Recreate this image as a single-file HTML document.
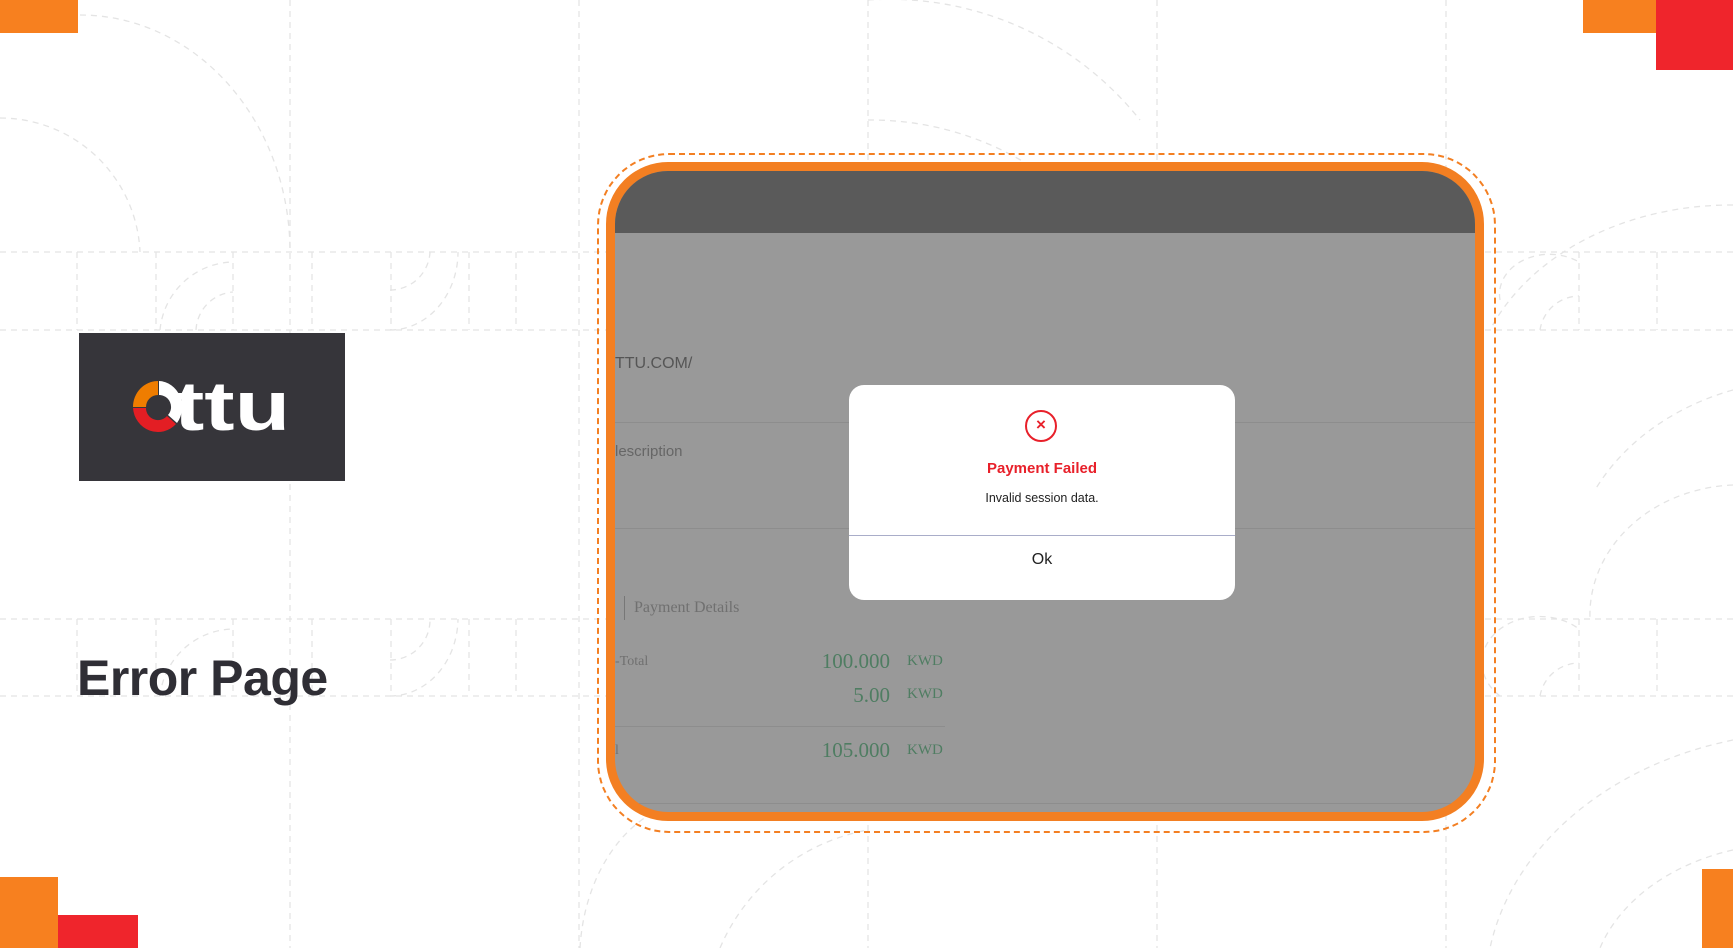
<!DOCTYPE html>
<html><head><meta charset="utf-8"><style>
*{margin:0;padding:0;box-sizing:border-box}
body{width:1733px;height:948px;background:#fff;position:relative;overflow:hidden;font-family:"Liberation Sans",sans-serif}
.abs{position:absolute}
</style></head><body>
<svg class="abs" style="left:0;top:0" width="1733" height="948">
<g stroke="#e4e4e4" stroke-width="1.3" fill="none" stroke-dasharray="6 5">
<line x1="0" y1="252" x2="1733" y2="252"/><line x1="0" y1="330" x2="1733" y2="330"/>
<line x1="0" y1="619" x2="1733" y2="619"/><line x1="0" y1="696" x2="1733" y2="696"/>
<line x1="290" y1="0" x2="290" y2="948"/><line x1="579" y1="0" x2="579" y2="948"/>
<line x1="868" y1="0" x2="868" y2="948"/><line x1="1157" y1="0" x2="1157" y2="948"/>
<line x1="1446" y1="0" x2="1446" y2="948"/>
<g>
<line x1="77" y1="252" x2="77" y2="330"/><line x1="156" y1="252" x2="156" y2="330"/><line x1="233" y1="252" x2="233" y2="330"/><line x1="312" y1="252" x2="312" y2="330"/><line x1="391" y1="252" x2="391" y2="330"/><line x1="469" y1="252" x2="469" y2="330"/><line x1="516" y1="252" x2="516" y2="330"/>
<line x1="77" y1="619" x2="77" y2="696"/><line x1="156" y1="619" x2="156" y2="696"/><line x1="233" y1="619" x2="233" y2="696"/><line x1="312" y1="619" x2="312" y2="696"/><line x1="391" y1="619" x2="391" y2="696"/><line x1="469" y1="619" x2="469" y2="696"/><line x1="516" y1="619" x2="516" y2="696"/>
<line x1="1579" y1="252" x2="1579" y2="330"/><line x1="1657" y1="252" x2="1657" y2="330"/>
<line x1="1579" y1="619" x2="1579" y2="696"/><line x1="1657" y1="619" x2="1657" y2="696"/>
</g>
<path d="M0 118 A140 140 0 0 1 140 252"/><path d="M80 15 A210 237 0 0 1 290 252"/>
<path d="M160 330 A75 75 0 0 1 233 262"/><path d="M196 330 A40 40 0 0 1 233 292"/>
<path d="M390 290 A40 40 0 0 0 430 252"/><path d="M390 330 A68 78 0 0 0 458 252"/>
<path d="M868 120 A300 300 0 0 1 1157 330"/><path d="M868 0 A320 320 0 0 1 1140 120"/>
<path d="M1733 205 A260 200 0 0 0 1490 330"/><path d="M1733 390 A240 200 0 0 0 1595 490"/>
<path d="M1733 485 A150 130 0 0 0 1590 619"/><path d="M1733 740 A330 260 0 0 0 1490 948"/>
<path d="M1733 850 A200 150 0 0 0 1600 948"/>
<path d="M160 696 A75 75 0 0 1 233 629"/><path d="M390 660 A40 40 0 0 0 430 619"/><path d="M390 696 A68 78 0 0 0 458 619"/>
<path d="M580 948 A120 160 0 0 1 700 800"/><path d="M720 948 A200 200 0 0 1 868 830"/>
<path d="M1500 300 A50 40 0 0 1 1579 262"/><path d="M1540 330 A40 40 0 0 1 1579 296"/>
<path d="M1500 696 A50 40 0 0 1 1579 629"/><path d="M1540 696 A40 40 0 0 1 1579 663"/>
</g>
</svg>
<div class="abs" style="left:0;top:0;width:78px;height:33px;background:#f7801f"></div>
<div class="abs" style="left:1583px;top:0;width:75px;height:33px;background:#f7801f"></div>
<div class="abs" style="left:1656px;top:0;width:77px;height:70px;background:#ef252c"></div>
<div class="abs" style="left:0;top:877px;width:58px;height:71px;background:#f7801f"></div>
<div class="abs" style="left:58px;top:915px;width:80px;height:33px;background:#ef252c"></div>
<div class="abs" style="left:1702px;top:869px;width:31px;height:79px;background:#f7801f"></div>
<!-- logo -->
<div class="abs" style="left:79px;top:333px;width:266px;height:148px;background:#36353a"></div>
<svg class="abs" style="left:131px;top:379px" width="54" height="56" viewBox="0 0 54 56">
<path d="M2 28 A25 26 0 0 1 27 2 L27 16 A12 12 0 0 0 15 28 Z" fill="#ef7d00"/>
<path d="M2 29 A25 26 0 0 0 45 45 L36 37 A12 12 0 0 1 15 29 Z" fill="#e31e24"/>
<path d="M28 2 A24 26 0 0 1 46 44 L37 36 A12 12 0 0 0 28 16 Z" fill="#fff"/>
</svg>
<div class="abs" style="left:174px;top:370px;color:#fff;font-weight:bold;font-size:70px;letter-spacing:0;line-height:72px;transform:scaleX(1.3);transform-origin:left top">ttu</div>
<div class="abs" style="left:77px;top:650px;color:#2f2e35;font-weight:bold;font-size:50px;letter-spacing:-0.5px;line-height:56px">Error Page</div>
<!-- card -->
<div class="abs" style="left:597px;top:153px;width:899px;height:680px;border:2.5px dashed #f37f22;border-radius:72px"></div>
<div class="abs" style="left:606px;top:162px;width:878px;height:659px;border:9px solid #f37f22;border-radius:62px;background:#999;overflow:hidden">
 <div style="position:absolute;left:0;top:0;right:0;height:62px;background:#5a5a5a"></div>
 <div style="position:absolute;left:0;top:184px;font-size:16px;color:#555">TTU.COM/</div>
 <div style="position:absolute;left:0;right:0;top:251px;border-top:1px solid #8d8d8d"></div>
 <div style="position:absolute;left:0;top:272px;font-size:15px;color:#666">lescription</div>
 <div style="position:absolute;left:0;right:0;top:357px;border-top:1px solid #8d8d8d"></div>
 <div style="position:absolute;left:9px;top:425px;width:1px;height:24px;background:#777"></div>
 <div style="position:absolute;left:19px;top:428px;font-family:'Liberation Serif',serif;font-size:16px;color:#707070">Payment Details</div>
 <div style="font-family:'Liberation Serif',serif;color:#4f7d62">
 <div style="position:absolute;left:0;top:483px;font-size:14px;color:#707070">-Total</div>
 <div style="position:absolute;right:585px;top:478px;font-size:21px">100.000</div>
 <div style="position:absolute;left:292px;top:482px;font-size:15px">KWD</div>
 <div style="position:absolute;right:585px;top:512px;font-size:21px">5.00</div>
 <div style="position:absolute;left:292px;top:515px;font-size:15px">KWD</div>
 <div style="position:absolute;left:0;width:330px;top:555px;border-top:1px solid #8d8d8d"></div>
 <div style="position:absolute;left:0;top:572px;font-size:14px;color:#707070">l</div>
 <div style="position:absolute;right:585px;top:567px;font-size:21px">105.000</div>
 <div style="position:absolute;left:292px;top:571px;font-size:15px">KWD</div>
 </div>
 <div style="position:absolute;left:0;right:0;top:632px;border-top:1px solid #8d8d8d"></div>
</div>
<!-- modal -->
<div class="abs" style="left:849px;top:385px;width:386px;height:215px;background:#fff;border-radius:15px;text-align:center">
 <div style="position:absolute;left:176px;top:25px;width:32px;height:32px;border:2px solid #e8202a;border-radius:50%;color:#e8202a;font-size:17px;line-height:26px;font-weight:bold">×</div>
 <div style="position:absolute;left:0;right:0;top:75px;color:#e8202a;font-weight:bold;font-size:15px">Payment Failed</div>
 <div style="position:absolute;left:0;right:0;top:106px;color:#222;font-size:12.5px">Invalid session data.</div>
 <div style="position:absolute;left:0;right:0;top:150px;border-top:1px solid #a9adc9"></div>
 <div style="position:absolute;left:0;right:0;top:166px;color:#222;font-size:16px">Ok</div>
</div>
</body></html>
